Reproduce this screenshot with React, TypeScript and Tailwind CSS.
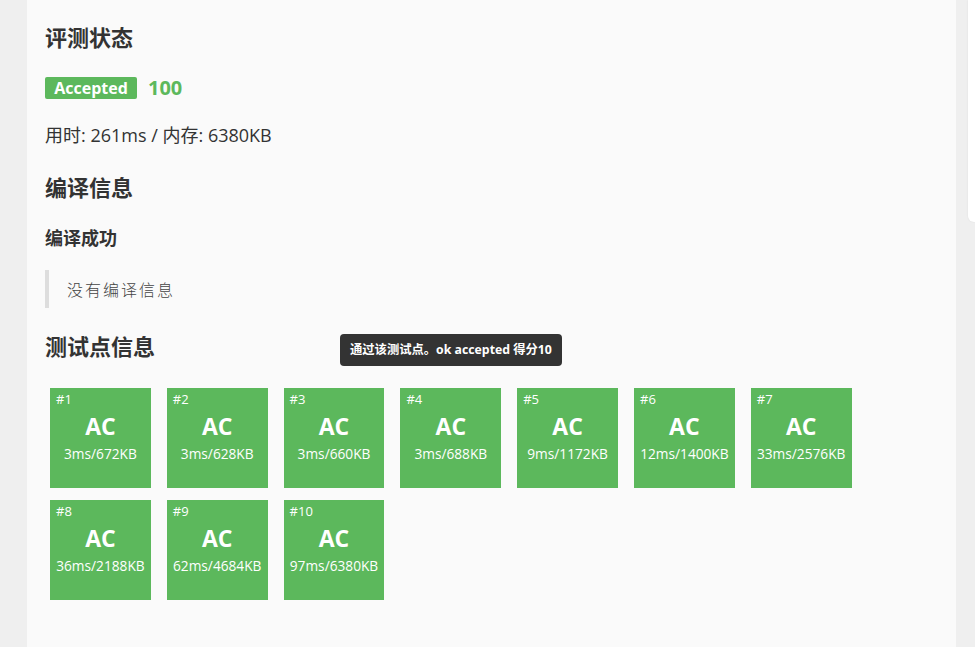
import React from 'react';

const cases = [
  { id: 1, time: '3ms', mem: '672KB' },
  { id: 2, time: '3ms', mem: '628KB' },
  { id: 3, time: '3ms', mem: '660KB' },
  { id: 4, time: '3ms', mem: '688KB' },
  { id: 5, time: '9ms', mem: '1172KB' },
  { id: 6, time: '12ms', mem: '1400KB' },
  { id: 7, time: '33ms', mem: '2576KB' },
  { id: 8, time: '36ms', mem: '2188KB' },
  { id: 9, time: '62ms', mem: '4684KB' },
  { id: 10, time: '97ms', mem: '6380KB' },
];

const font = "font-['Open_Sans','Noto_Sans_CJK_SC',sans-serif]";

export default function App() {
  return (
    <div className={`flex h-[647px] overflow-hidden bg-[#efefef] pl-[27px] text-[#333] ${font}`}>
      {/* main panel */}
      <main className="relative w-[929px] shrink-0 bg-[#fafafa] pl-[18px] pt-[23px]">
        <h2 className="text-[22px] font-bold leading-7">评测状态</h2>

        <div className="mt-[26px] flex h-[22px] items-center gap-[11px]">
          <span className="flex h-[22px] w-[92px] items-center justify-center rounded-[2px] bg-[#5cb85c] text-base font-bold text-white">
            Accepted
          </span>
          <span className="text-xl font-bold text-[#5cb85c]">100</span>
        </div>

        <p className="mt-[24px] text-[18px] leading-6">用时: 261ms / 内存: 6380KB</p>

        <h2 className="mt-[26px] text-[22px] font-bold leading-7">编译信息</h2>
        <h3 className="mt-[25px] text-[18px] font-bold leading-6">编译成功</h3>

        <blockquote className="mt-[20px] border-l-4 border-[#dddddd] py-[7px] pl-[18px] text-base leading-6 tracking-[2px] text-[#444] font-['Noto_Sans_CJK_SC',serif] font-light">
          没有编译信息
        </blockquote>

        <h2 className="mt-[24px] text-[22px] font-bold leading-7">测试点信息</h2>

        <div className="mt-[28px] flex w-[820px] flex-wrap gap-x-[16px] gap-y-[12px] pl-[5px]">
          {cases.map((c) => (
            <div key={c.id} className="relative flex h-[100px] w-[100.8px] flex-col items-center bg-[#5cb85c] text-white">
              <span className="absolute left-[6px] top-[1px] text-[13px] leading-5">#{c.id}</span>
              <span className="mt-[22px] text-[23px] font-bold leading-8">AC</span>
              <span className="mt-[2px] text-[13.7px] leading-5">
                {c.time}/{c.mem}
              </span>
            </div>
          ))}
        </div>

        {/* tooltip */}
        <div className="absolute left-[313px] top-[334px] flex h-[32px] items-center rounded-[4px] bg-[#333] px-[10px] text-[12.3px] font-bold text-white">
          通过该测试点。ok accepted 得分10
        </div>
      </main>

      {/* side card */}
      <aside className="ml-[12px] h-[222px] flex-1 rounded-bl-[6px] bg-white shadow-[0_0_2px_rgba(0,0,0,0.08)]" />
    </div>
  );
}
